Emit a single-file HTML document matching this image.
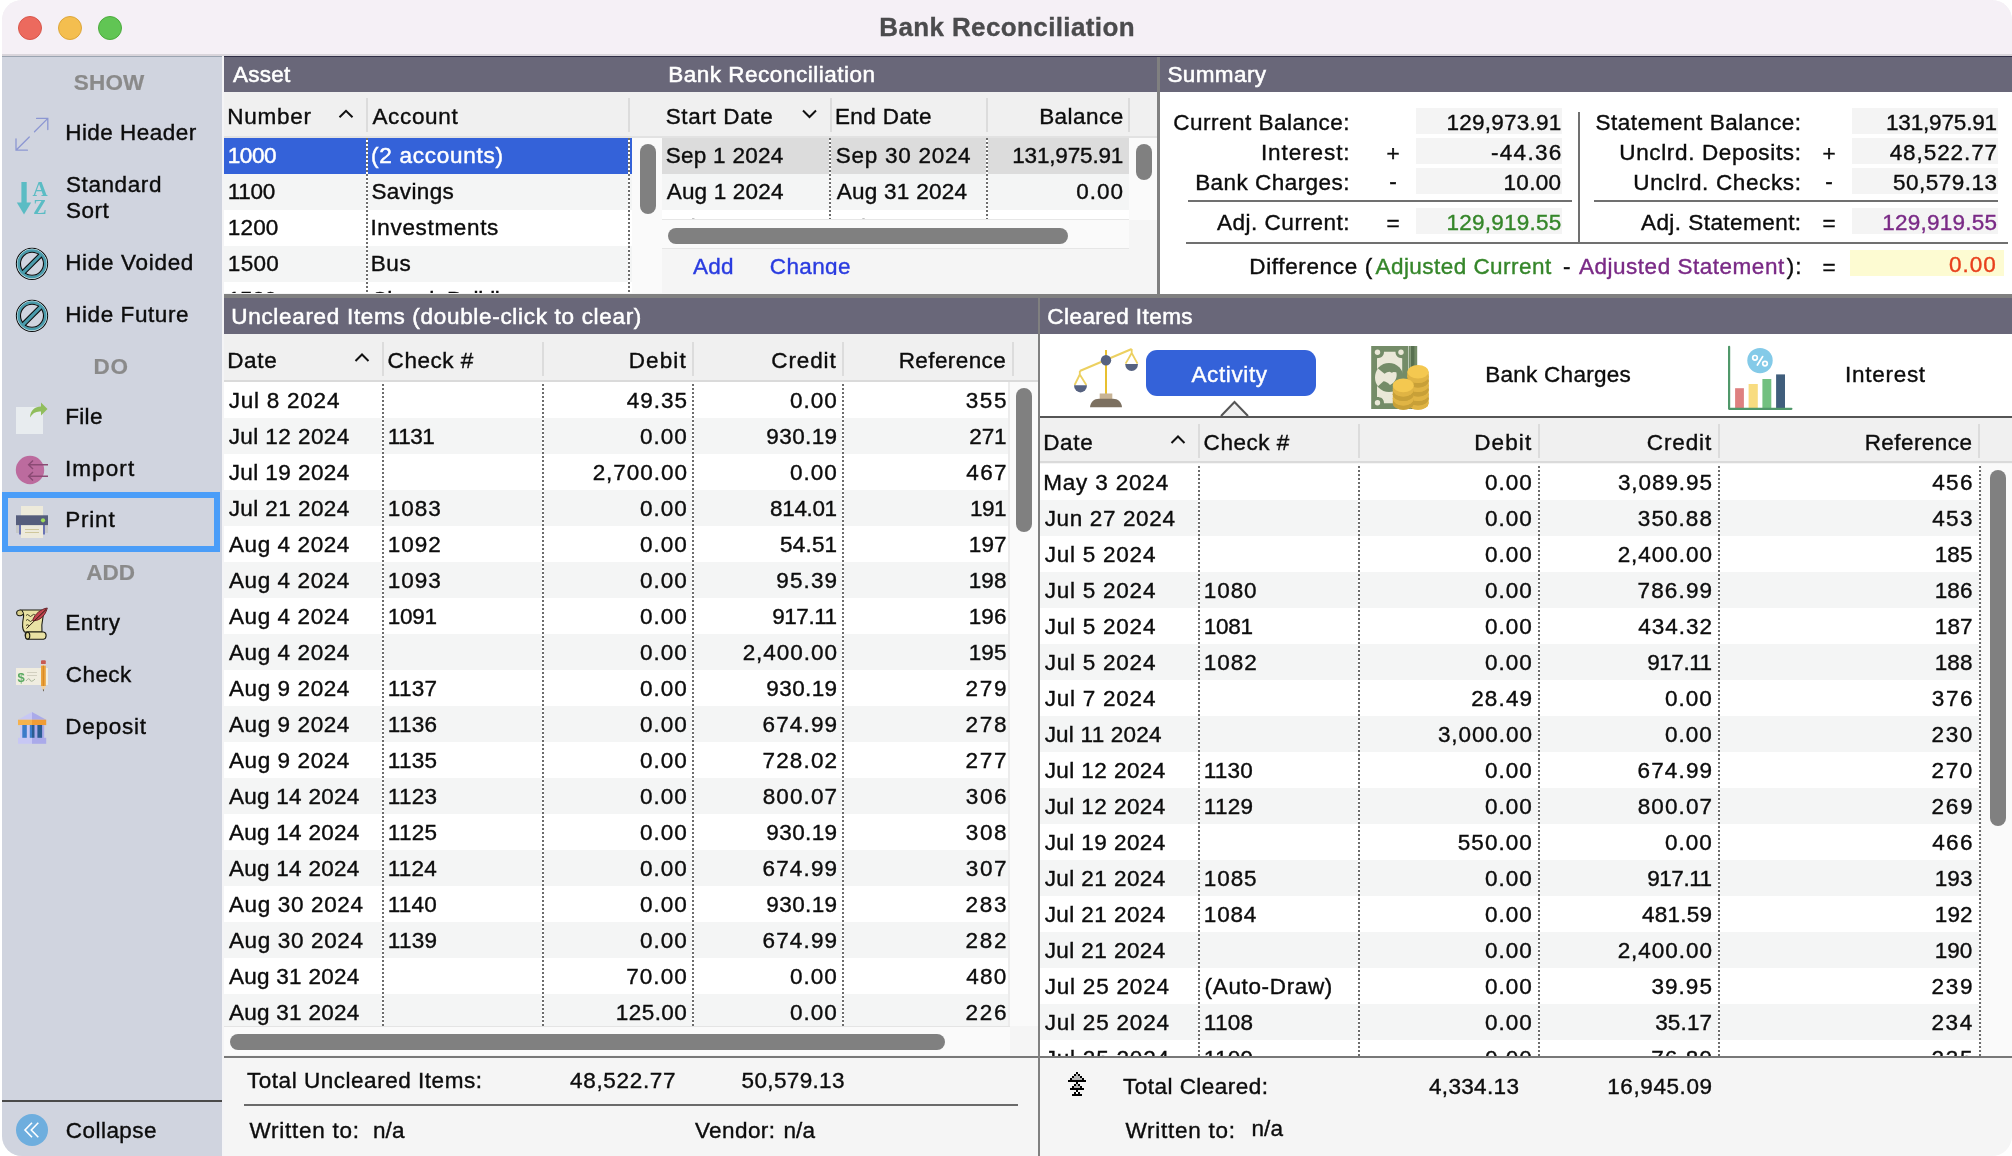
<!DOCTYPE html><html><head><meta charset="utf-8"><title>Bank Reconciliation</title><style>
*{box-sizing:border-box;margin:0;padding:0}
html,body{width:2012px;height:1156px;overflow:hidden;background:#fff}
body{font-family:"Liberation Sans",sans-serif;font-size:22.5px;color:#0c0c0c;position:relative;-webkit-text-stroke:.38px}
.a{position:absolute}
.win{will-change:transform;position:absolute;left:2px;top:0;width:2010px;height:1156px;border-radius:20px;overflow:hidden;background:#f5f5f5}
.tb{position:absolute;left:0;top:0;width:2010px;height:54px;background:#f5f0f6}
.tl{position:absolute;top:16px;width:24px;height:24px;border-radius:50%;border:1px solid}
.t{position:absolute;white-space:pre;height:30px;line-height:30px}
.side{position:absolute;left:0;top:56px;width:220px;height:1100px;background:#d0d4df}
.ph{position:absolute;background:#696779;height:36px}
.ch{position:absolute;background:#f0f0f0}
.row{position:absolute;left:0;height:36px}
.alt{background:#f4f5f5}
.hd{position:absolute;width:2px;background:#dcdcdc}
.dv2{background:repeating-linear-gradient(to bottom,#6c6c6c 0,#6c6c6c 2px,#fff 2px,#fff 4px)!important}.dv{position:absolute;width:2px;background:repeating-linear-gradient(to bottom,#fff 0,#fff 2px,#6c6c6c 2px,#6c6c6c 4px)}
.thumb{position:absolute;background:#808080;border-radius:8px}
.fld{position:absolute;background:#f4f4f4}
.hl{position:absolute;height:2px;background:#707070}
</style></head><body><div class="win">
<div class="tb"></div>
<div class="a" style="left:0;top:54px;width:2010px;height:2px;background:#d9d5db"></div>
<div class="a" style="left:222px;top:56px;width:1788px;height:1px;background:#2f2d45"></div>
<div class="tl" style="left:16px;background:#ec6a5e;border-color:#d8564b"></div>
<div class="tl" style="left:56px;background:#f4be4f;border-color:#dda63a"></div>
<div class="tl" style="left:96px;background:#61c554;border-color:#4cab3d"></div>
<span class="t" style="left:877.26px;top:12.0px;letter-spacing:0.38px;font-size:26px;font-weight:700;color:#4b4b4d;-webkit-text-stroke:0.35px;">Bank Reconciliation</span>
<div class="side"></div>
<div class="a" style="left:0;top:56px;width:220px;height:1px;background:#9ba4b1"></div>
<span class="t" style="left:71.85px;top:68.0px;letter-spacing:0.14px;font-weight:700;color:#8a8a8a;-webkit-text-stroke:0.2px;">SHOW</span>
<span class="t" style="left:91.49px;top:352.0px;letter-spacing:0.70px;font-weight:700;color:#8a8a8a;-webkit-text-stroke:0.2px;">DO</span>
<span class="t" style="left:84.24px;top:558.0px;letter-spacing:-0.02px;font-weight:700;color:#8a8a8a;-webkit-text-stroke:0.2px;">ADD</span>
<span class="t" style="left:63.15px;top:118.0px;letter-spacing:0.49px;">Hide Header</span>
<span class="t" style="left:63.98px;top:170.0px;letter-spacing:0.59px;">Standard</span>
<span class="t" style="left:63.98px;top:196.0px;letter-spacing:0.47px;">Sort</span>
<span class="t" style="left:63.15px;top:248.0px;letter-spacing:0.69px;">Hide Voided</span>
<span class="t" style="left:63.15px;top:300.0px;letter-spacing:0.58px;">Hide Future</span>
<span class="t" style="left:63.15px;top:402.0px;letter-spacing:0.36px;">File</span>
<span class="t" style="left:62.92px;top:454.0px;letter-spacing:1.10px;">Import</span>
<span class="t" style="left:63.15px;top:505.0px;letter-spacing:0.81px;">Print</span>
<span class="t" style="left:63.15px;top:608.0px;letter-spacing:0.59px;">Entry</span>
<span class="t" style="left:63.86px;top:660.0px;letter-spacing:0.41px;">Check</span>
<span class="t" style="left:63.15px;top:712.0px;letter-spacing:0.75px;">Deposit</span>
<span class="t" style="left:63.86px;top:1116.0px;letter-spacing:0.44px;">Collapse</span>
<div class="a" style="left:0;top:492px;width:218px;height:60px;border:6px solid #4a9df8"></div>
<div class="a" style="left:0;top:1100px;width:220px;height:2px;background:#4a4a4a"></div>
<div class="a" style="left:220px;top:56px;width:2px;height:1100px;background:#f4f4f6"></div>
<div class="ph" style="left:222px;top:57px;width:934px;height:35px"></div>
<span class="t" style="left:230.96px;top:60.0px;letter-spacing:0.23px;color:#fff;-webkit-text-stroke:0.55px;">Asset</span>
<span class="t" style="left:666.15px;top:60.0px;letter-spacing:0.52px;color:#fff;-webkit-text-stroke:0.55px;">Bank Reconciliation</span>
<div class="ch" style="left:222px;top:92px;width:934px;height:46px"></div>
<div class="a" style="left:222px;top:136px;width:934px;height:2px;background:#e2e2e2"></div>
<div class="hd" style="left:364.0px;top:98px;height:34px"></div>
<div class="hd" style="left:626.0px;top:98px;height:34px"></div>
<div class="hd" style="left:827.5px;top:98px;height:34px"></div>
<div class="hd" style="left:984.0px;top:98px;height:34px"></div>
<div class="hd" style="left:1126.0px;top:98px;height:34px"></div>
<span class="t" style="left:225.15px;top:102.0px;letter-spacing:0.79px;">Number</span>
<span class="t" style="left:370.46px;top:102.0px;letter-spacing:0.65px;">Account</span>
<span class="t" style="left:663.73px;top:102.0px;letter-spacing:0.64px;">Start Date</span>
<span class="t" style="left:832.90px;top:102.0px;letter-spacing:0.40px;">End Date</span>
<span class="t" style="left:1037.15px;top:102.0px;letter-spacing:0.46px;">Balance</span>
<div class="a" style="left:222px;top:138px;width:408px;height:155px;overflow:hidden;background:#fff">
<div class="row" style="top:0px;width:408px;background:#3462d9;"></div>
<span class="t" style="left:3.79px;top:3.0px;letter-spacing:-0.45px;color:#fff;-webkit-text-stroke:0.5px;">1000</span>
<span class="t" style="left:147.10px;top:3.0px;letter-spacing:0.73px;color:#fff;-webkit-text-stroke:0.5px;">(2 accounts)</span>
<div class="row alt" style="top:36px;width:408px;"></div>
<span class="t" style="left:3.79px;top:39.0px;letter-spacing:-0.27px;">1100</span>
<span class="t" style="left:147.48px;top:39.0px;letter-spacing:0.38px;">Savings</span>
<div class="row" style="top:72px;width:408px;"></div>
<span class="t" style="left:3.79px;top:75.0px;letter-spacing:0.18px;">1200</span>
<span class="t" style="left:146.42px;top:75.0px;letter-spacing:0.66px;">Investments</span>
<div class="row alt" style="top:108px;width:408px;"></div>
<span class="t" style="left:3.79px;top:111.0px;letter-spacing:0.34px;">1500</span>
<span class="t" style="left:146.65px;top:111.0px;letter-spacing:0.69px;">Bus</span>
<div class="row" style="top:144px;width:408px;"></div>
<span class="t" style="left:3.79px;top:147.0px;letter-spacing:-0.32px;">1520</span>
<span class="t" style="left:147.36px;top:147.0px;letter-spacing:-0.45px;">Church Building</span>
<div class="dv dv2" style="left:142px;top:0;height:155px"></div>
<div class="dv dv2" style="left:404px;top:0;height:155px"></div>
</div>
<div class="a" style="left:630px;top:138px;width:30px;height:155px;background:#fafafa"></div>
<div class="thumb" style="left:638px;top:144px;width:16px;height:70px"></div>
<div class="a" style="left:660px;top:138px;width:467px;height:81px;overflow:hidden;background:#fff">
<div class="row" style="top:0px;width:467px;background:#dcdcdc;"></div>
<span class="t" style="left:3.73px;top:3.0px;letter-spacing:0.28px;">Sep 1 2024</span>
<span class="t" style="left:173.73px;top:3.0px;letter-spacing:0.73px;">Sep 30 2024</span>
<span class="t" style="left:350.24px;top:3.0px;letter-spacing:-0.17px;">131,975.91</span>
<div class="row alt" style="top:36px;width:467px;"></div>
<span class="t" style="left:4.71px;top:39.0px;letter-spacing:0.18px;">Aug 1 2024</span>
<span class="t" style="left:174.71px;top:39.0px;letter-spacing:0.27px;">Aug 31 2024</span>
<span class="t" style="left:414.27px;top:39.0px;letter-spacing:1.02px;">0.00</span>
<div class="row" style="top:72px;width:467px;"></div>
<span class="t" style="left:4.40px;top:75.0px;letter-spacing:0.36px;">Jul 1 2024</span>
<span class="t" style="left:174.40px;top:75.0px;letter-spacing:0.43px;">Jul 31 2024</span>
<span class="t" style="left:414.27px;top:75.0px;letter-spacing:1.02px;">0.00</span>
<div class="dv dv2" style="left:167px;top:0;height:81px"></div>
<div class="dv dv2" style="left:324px;top:0;height:81px"></div>
</div>
<div class="a" style="left:660px;top:219px;width:467px;height:1px;background:#e6e6e6"></div>
<div class="a" style="left:660px;top:220px;width:467px;height:28px;background:#fafafa"></div>
<div class="a" style="left:660px;top:248px;width:467px;height:1px;background:#e6e6e6"></div>
<div class="thumb" style="left:666px;top:228px;width:400px;height:16px"></div>
<div class="a" style="left:1127px;top:138px;width:29px;height:82px;background:#fafafa"></div>
<div class="thumb" style="left:1134px;top:144px;width:16px;height:36px"></div>
<div class="a" style="left:660px;top:249px;width:496px;height:26px;overflow:hidden">
<span class="t" style="left:30.96px;top:3.0px;letter-spacing:0.22px;color:#2a3ce0;">Add</span>
<span class="t" style="left:107.86px;top:3.0px;letter-spacing:0.36px;color:#2a3ce0;">Change</span>
</div>
<div class="a" style="left:1155px;top:57px;width:3px;height:237px;background:#808080"></div>
<div class="ph" style="left:1158px;top:57px;width:852px;height:35px"></div>
<span class="t" style="left:1165.48px;top:60.0px;letter-spacing:0.38px;color:#fff;-webkit-text-stroke:0.55px;">Summary</span>
<div class="a" style="left:1158px;top:92px;width:852px;height:202px;background:#fff"></div>
<div class="fld" style="left:1414px;top:108px;width:146px;height:26px;background:#f4f4f4"></div>
<div class="fld" style="left:1850px;top:108px;width:146px;height:26px;background:#f4f4f4"></div>
<div class="fld" style="left:1414px;top:138px;width:146px;height:26px;background:#f4f4f4"></div>
<div class="fld" style="left:1850px;top:138px;width:146px;height:26px;background:#f4f4f4"></div>
<div class="fld" style="left:1414px;top:168px;width:146px;height:26px;background:#f4f4f4"></div>
<div class="fld" style="left:1850px;top:168px;width:146px;height:26px;background:#f4f4f4"></div>
<div class="fld" style="left:1414px;top:208px;width:146px;height:26px;background:#f4f4f4"></div>
<div class="fld" style="left:1850px;top:208px;width:146px;height:26px;background:#f4f4f4"></div>
<div class="fld" style="left:1848px;top:250px;width:154px;height:26px;background:#fdfbd2"></div>
<span class="t" style="left:1171.36px;top:108.0px;letter-spacing:0.49px;">Current Balance:</span>
<span class="t" style="left:1444.54px;top:108.0px;letter-spacing:0.24px;">129,973.91</span>
<span class="t" style="left:1593.48px;top:108.0px;letter-spacing:0.54px;">Statement Balance:</span>
<span class="t" style="left:1883.99px;top:108.0px;letter-spacing:-0.17px;">131,975.91</span>
<span class="t" style="left:1258.92px;top:138.0px;letter-spacing:0.92px;">Interest:</span>
<span class="t" style="left:1371px;width:40px;text-align:center;top:139px">+</span>
<span class="t" style="left:1489.05px;top:138.0px;letter-spacing:1.28px;">-44.36</span>
<span class="t" style="left:1617.26px;top:138.0px;letter-spacing:0.65px;">Unclrd. Deposits:</span>
<span class="t" style="left:1807px;width:40px;text-align:center;top:139px">+</span>
<span class="t" style="left:1887.68px;top:138.0px;letter-spacing:0.92px;">48,522.77</span>
<span class="t" style="left:1193.15px;top:168.0px;letter-spacing:0.46px;">Bank Charges:</span>
<span class="t" style="left:1371px;width:40px;text-align:center;top:167px">-</span>
<span class="t" style="left:1501.54px;top:168.0px;letter-spacing:0.32px;">10.00</span>
<span class="t" style="left:1631.26px;top:168.0px;letter-spacing:0.64px;">Unclrd. Checks:</span>
<span class="t" style="left:1807px;width:40px;text-align:center;top:167px">-</span>
<span class="t" style="left:1891.00px;top:168.0px;letter-spacing:0.49px;">50,579.13</span>
<span class="t" style="left:1214.96px;top:208.0px;letter-spacing:0.52px;">Adj. Current:</span>
<span class="t" style="left:1371px;width:40px;text-align:center;top:209px">=</span>
<span class="t" style="left:1444.54px;top:208.0px;letter-spacing:0.23px;color:#35862a;">129,919.55</span>
<span class="t" style="left:1638.96px;top:208.0px;letter-spacing:0.45px;">Adj. Statement:</span>
<span class="t" style="left:1807px;width:40px;text-align:center;top:209px">=</span>
<span class="t" style="left:1880.29px;top:208.0px;letter-spacing:0.23px;color:#7a2a86;">129,919.55</span>
<div class="hl" style="left:1186px;top:200px;width:384px"></div>
<div class="hl" style="left:1592px;top:200px;width:404px"></div>
<div class="hl" style="left:1184px;top:242px;width:822px"></div>
<div class="a" style="left:1576px;top:112px;width:2px;height:130px;background:#707070"></div>
<span class="t" style="left:1247.35px;top:252.0px;letter-spacing:0.63px;">Difference (</span>
<span class="t" style="left:1373.46px;top:252.0px;letter-spacing:0.46px;color:#35862a;">Adjusted Current</span>
<span class="t" style="left:1561.00px;top:252.0px;letter-spacing:2.50px;">-</span>
<span class="t" style="left:1576.96px;top:252.0px;letter-spacing:0.52px;color:#7a2a86;">Adjusted Statement</span>
<span class="t" style="left:1784.87px;top:252.0px;letter-spacing:0.94px;">):</span>
<span class="t" style="left:1807px;width:40px;text-align:center;top:253px">=</span>
<span class="t" style="left:1947.02px;top:250.0px;letter-spacing:1.02px;color:#e8401c;">0.00</span>
<div class="a" style="left:222px;top:294px;width:1788px;height:4px;background:#808080"></div>
<div class="ph" style="left:222px;top:298px;width:814px"></div>
<span class="t" style="left:229.26px;top:302.0px;letter-spacing:0.69px;color:#fff;-webkit-text-stroke:0.55px;">Uncleared Items (double-click to clear)</span>
<div class="ch" style="left:222px;top:334px;width:814px;height:47px"></div>
<div class="a" style="left:222px;top:380px;width:814px;height:2px;background:#dadada"></div>
<div class="hd" style="left:379.5px;top:342px;height:34px"></div>
<div class="hd" style="left:540.0px;top:342px;height:34px"></div>
<div class="hd" style="left:690.0px;top:342px;height:34px"></div>
<div class="hd" style="left:840.0px;top:342px;height:34px"></div>
<div class="hd" style="left:1010.0px;top:342px;height:34px"></div>
<span class="t" style="left:225.15px;top:346.0px;letter-spacing:0.69px;">Date</span>
<span class="t" style="left:385.61px;top:346.0px;letter-spacing:0.53px;">Check #</span>
<span class="t" style="left:626.65px;top:346.0px;letter-spacing:1.12px;">Debit</span>
<span class="t" style="left:769.36px;top:346.0px;letter-spacing:0.86px;">Credit</span>
<span class="t" style="left:896.65px;top:346.0px;letter-spacing:0.41px;">Reference</span>
<div class="a" style="left:222px;top:382px;width:786px;height:644px;overflow:hidden;background:#fff">
<span class="t" style="left:4.65px;top:4.0px;letter-spacing:0.77px;">Jul 8 2024</span>
<span class="t" style="left:402.78px;top:4.0px;letter-spacing:0.96px;">49.35</span>
<span class="t" style="left:566.02px;top:4.0px;letter-spacing:1.02px;">0.00</span>
<span class="t" style="left:741.84px;top:4.0px;letter-spacing:1.53px;">355</span>
<div class="row alt" style="top:36px;width:786px"></div>
<span class="t" style="left:4.65px;top:40.0px;letter-spacing:0.43px;">Jul 12 2024</span>
<span class="t" style="left:163.79px;top:40.0px;letter-spacing:-0.45px;">1131</span>
<span class="t" style="left:416.02px;top:40.0px;letter-spacing:1.02px;">0.00</span>
<span class="t" style="left:542.35px;top:40.0px;letter-spacing:0.38px;">930.19</span>
<span class="t" style="left:745.27px;top:40.0px;letter-spacing:-0.11px;">271</span>
<span class="t" style="left:4.65px;top:76.0px;letter-spacing:0.43px;">Jul 19 2024</span>
<span class="t" style="left:368.67px;top:76.0px;letter-spacing:0.95px;">2,700.00</span>
<span class="t" style="left:566.02px;top:76.0px;letter-spacing:1.02px;">0.00</span>
<span class="t" style="left:742.18px;top:76.0px;letter-spacing:1.45px;">467</span>
<div class="row alt" style="top:108px;width:786px"></div>
<span class="t" style="left:4.65px;top:112.0px;letter-spacing:0.43px;">Jul 21 2024</span>
<span class="t" style="left:163.79px;top:112.0px;letter-spacing:0.95px;">1083</span>
<span class="t" style="left:416.02px;top:112.0px;letter-spacing:1.02px;">0.00</span>
<span class="t" style="left:546.12px;top:112.0px;letter-spacing:-0.37px;">814.01</span>
<span class="t" style="left:745.95px;top:112.0px;letter-spacing:-0.45px;">191</span>
<span class="t" style="left:4.96px;top:148.0px;letter-spacing:0.59px;">Aug 4 2024</span>
<span class="t" style="left:163.79px;top:148.0px;letter-spacing:0.99px;">1092</span>
<span class="t" style="left:416.02px;top:148.0px;letter-spacing:1.02px;">0.00</span>
<span class="t" style="left:556.10px;top:148.0px;letter-spacing:0.17px;">54.51</span>
<span class="t" style="left:744.69px;top:148.0px;letter-spacing:0.20px;">197</span>
<div class="row alt" style="top:180px;width:786px"></div>
<span class="t" style="left:4.96px;top:184.0px;letter-spacing:0.59px;">Aug 4 2024</span>
<span class="t" style="left:163.79px;top:184.0px;letter-spacing:0.95px;">1093</span>
<span class="t" style="left:416.02px;top:184.0px;letter-spacing:1.02px;">0.00</span>
<span class="t" style="left:552.25px;top:184.0px;letter-spacing:1.13px;">95.39</span>
<span class="t" style="left:744.69px;top:184.0px;letter-spacing:0.12px;">198</span>
<span class="t" style="left:4.96px;top:220.0px;letter-spacing:0.59px;">Aug 4 2024</span>
<span class="t" style="left:163.79px;top:220.0px;letter-spacing:-0.25px;">1091</span>
<span class="t" style="left:416.02px;top:220.0px;letter-spacing:1.02px;">0.00</span>
<span class="t" style="left:548.19px;top:220.0px;letter-spacing:-0.45px;">917.11</span>
<span class="t" style="left:744.69px;top:220.0px;letter-spacing:0.13px;">196</span>
<div class="row alt" style="top:252px;width:786px"></div>
<span class="t" style="left:4.96px;top:256.0px;letter-spacing:0.59px;">Aug 4 2024</span>
<span class="t" style="left:416.02px;top:256.0px;letter-spacing:1.02px;">0.00</span>
<span class="t" style="left:518.67px;top:256.0px;letter-spacing:0.95px;">2,400.00</span>
<span class="t" style="left:744.69px;top:256.0px;letter-spacing:0.11px;">195</span>
<span class="t" style="left:4.96px;top:292.0px;letter-spacing:0.59px;">Aug 9 2024</span>
<span class="t" style="left:163.79px;top:292.0px;letter-spacing:0.32px;">1137</span>
<span class="t" style="left:416.02px;top:292.0px;letter-spacing:1.02px;">0.00</span>
<span class="t" style="left:542.35px;top:292.0px;letter-spacing:0.38px;">930.19</span>
<span class="t" style="left:741.57px;top:292.0px;letter-spacing:1.73px;">279</span>
<div class="row alt" style="top:324px;width:786px"></div>
<span class="t" style="left:4.96px;top:328.0px;letter-spacing:0.59px;">Aug 9 2024</span>
<span class="t" style="left:163.79px;top:328.0px;letter-spacing:0.27px;">1136</span>
<span class="t" style="left:416.02px;top:328.0px;letter-spacing:1.02px;">0.00</span>
<span class="t" style="left:538.56px;top:328.0px;letter-spacing:1.14px;">674.99</span>
<span class="t" style="left:741.57px;top:328.0px;letter-spacing:1.68px;">278</span>
<span class="t" style="left:4.96px;top:364.0px;letter-spacing:0.59px;">Aug 9 2024</span>
<span class="t" style="left:163.79px;top:364.0px;letter-spacing:0.26px;">1135</span>
<span class="t" style="left:416.02px;top:364.0px;letter-spacing:1.02px;">0.00</span>
<span class="t" style="left:538.55px;top:364.0px;letter-spacing:1.15px;">728.02</span>
<span class="t" style="left:741.57px;top:364.0px;letter-spacing:1.76px;">277</span>
<div class="row alt" style="top:396px;width:786px"></div>
<span class="t" style="left:4.96px;top:400.0px;letter-spacing:0.27px;">Aug 14 2024</span>
<span class="t" style="left:163.79px;top:400.0px;letter-spacing:0.27px;">1123</span>
<span class="t" style="left:416.02px;top:400.0px;letter-spacing:1.02px;">0.00</span>
<span class="t" style="left:538.72px;top:400.0px;letter-spacing:1.12px;">800.07</span>
<span class="t" style="left:741.84px;top:400.0px;letter-spacing:1.55px;">306</span>
<span class="t" style="left:4.96px;top:436.0px;letter-spacing:0.27px;">Aug 14 2024</span>
<span class="t" style="left:163.79px;top:436.0px;letter-spacing:0.26px;">1125</span>
<span class="t" style="left:416.02px;top:436.0px;letter-spacing:1.02px;">0.00</span>
<span class="t" style="left:542.35px;top:436.0px;letter-spacing:0.38px;">930.19</span>
<span class="t" style="left:741.84px;top:436.0px;letter-spacing:1.54px;">308</span>
<div class="row alt" style="top:468px;width:786px"></div>
<span class="t" style="left:4.96px;top:472.0px;letter-spacing:0.27px;">Aug 14 2024</span>
<span class="t" style="left:163.79px;top:472.0px;letter-spacing:0.16px;">1124</span>
<span class="t" style="left:416.02px;top:472.0px;letter-spacing:1.02px;">0.00</span>
<span class="t" style="left:538.56px;top:472.0px;letter-spacing:1.14px;">674.99</span>
<span class="t" style="left:741.84px;top:472.0px;letter-spacing:1.62px;">307</span>
<span class="t" style="left:4.96px;top:508.0px;letter-spacing:0.64px;">Aug 30 2024</span>
<span class="t" style="left:163.79px;top:508.0px;letter-spacing:0.23px;">1140</span>
<span class="t" style="left:416.02px;top:508.0px;letter-spacing:1.02px;">0.00</span>
<span class="t" style="left:542.35px;top:508.0px;letter-spacing:0.38px;">930.19</span>
<span class="t" style="left:741.57px;top:508.0px;letter-spacing:1.69px;">283</span>
<div class="row alt" style="top:540px;width:786px"></div>
<span class="t" style="left:4.96px;top:544.0px;letter-spacing:0.64px;">Aug 30 2024</span>
<span class="t" style="left:163.79px;top:544.0px;letter-spacing:0.30px;">1139</span>
<span class="t" style="left:416.02px;top:544.0px;letter-spacing:1.02px;">0.00</span>
<span class="t" style="left:538.56px;top:544.0px;letter-spacing:1.14px;">674.99</span>
<span class="t" style="left:741.57px;top:544.0px;letter-spacing:1.76px;">282</span>
<span class="t" style="left:4.96px;top:580.0px;letter-spacing:0.27px;">Aug 31 2024</span>
<span class="t" style="left:402.15px;top:580.0px;letter-spacing:1.10px;">70.00</span>
<span class="t" style="left:566.02px;top:580.0px;letter-spacing:1.02px;">0.00</span>
<span class="t" style="left:742.18px;top:580.0px;letter-spacing:1.32px;">480</span>
<div class="row alt" style="top:612px;width:786px"></div>
<span class="t" style="left:4.96px;top:616.0px;letter-spacing:0.27px;">Aug 31 2024</span>
<span class="t" style="left:391.69px;top:616.0px;letter-spacing:0.47px;">125.00</span>
<span class="t" style="left:566.02px;top:616.0px;letter-spacing:1.02px;">0.00</span>
<span class="t" style="left:741.57px;top:616.0px;letter-spacing:1.69px;">226</span>
<div class="dv" style="left:157.5px;top:0;height:644px"></div>
<div class="dv" style="left:318.0px;top:0;height:644px"></div>
<div class="dv" style="left:468.0px;top:0;height:644px"></div>
<div class="dv" style="left:618.0px;top:0;height:644px"></div>
</div>
<div class="a" style="left:1006px;top:382px;width:30px;height:644px;background:#fafafa"></div>
<div class="a" style="left:1006px;top:382px;width:2px;height:645px;background:#ececec"></div>
<div class="thumb" style="left:1014px;top:388px;width:16px;height:144px"></div>
<div class="a" style="left:222px;top:1026px;width:786px;height:1px;background:#e4e4e4"></div>
<div class="a" style="left:222px;top:1027px;width:786px;height:28px;background:#fafafa"></div>
<div class="thumb" style="left:228px;top:1034px;width:715px;height:16px"></div>
<div class="a" style="left:222px;top:1056px;width:1788px;height:2px;background:#787878"></div>
<span class="t" style="left:244.99px;top:1066.0px;letter-spacing:0.53px;">Total Uncleared Items:</span>
<span class="t" style="left:567.98px;top:1066.0px;letter-spacing:0.69px;">48,522.77</span>
<span class="t" style="left:739.60px;top:1066.0px;letter-spacing:0.35px;">50,579.13</span>
<div class="hl" style="left:242px;top:1104px;width:774px;background:#6a6a6a"></div>
<span class="t" style="left:247.40px;top:1116.0px;letter-spacing:0.75px;">Written to:</span>
<span class="t" style="left:371.01px;top:1116.0px;letter-spacing:0.11px;">n/a</span>
<span class="t" style="left:692.90px;top:1116.0px;letter-spacing:0.43px;">Vendor:</span>
<span class="t" style="left:781.51px;top:1116.0px;letter-spacing:0.11px;">n/a</span>
<div class="a" style="left:1036px;top:298px;width:2px;height:858px;background:#808080"></div>
<div class="ph" style="left:1038px;top:298px;width:972px"></div>
<span class="t" style="left:1045.36px;top:302.0px;letter-spacing:0.43px;color:#fff;-webkit-text-stroke:0.55px;">Cleared Items</span>
<div class="a" style="left:1038px;top:334px;width:972px;height:82px;background:#fff"></div>
<div class="a" style="left:1144px;top:350px;width:170px;height:46px;border-radius:11px;background:#3462d9"></div>
<span class="t" style="left:1189.46px;top:360.0px;letter-spacing:0.62px;color:#fff;-webkit-text-stroke:0.4px;">Activity</span>
<span class="t" style="left:1483.15px;top:360.0px;letter-spacing:0.28px;">Bank Charges</span>
<span class="t" style="left:1842.92px;top:360.0px;letter-spacing:0.74px;">Interest</span>
<div class="a" style="left:1038px;top:416px;width:972px;height:2px;background:#555"></div>
<svg class="a" style="left:1215px;top:397px" width="40" height="22" viewBox="0 0 40 22"><path d="M4 19 L17.5 5 L31 19" fill="#f0f0f0" stroke="#555" stroke-width="2"/></svg>
<div class="ch" style="left:1038px;top:418px;width:972px;height:44px"></div>
<div class="a" style="left:1038px;top:461px;width:972px;height:2px;background:#dadada"></div>
<div class="hd" style="left:1196px;top:424px;height:34px"></div>
<div class="hd" style="left:1356px;top:424px;height:34px"></div>
<div class="hd" style="left:1536px;top:424px;height:34px"></div>
<div class="hd" style="left:1716px;top:424px;height:34px"></div>
<div class="hd" style="left:1976px;top:424px;height:34px"></div>
<span class="t" style="left:1041.15px;top:428.0px;letter-spacing:0.69px;">Date</span>
<span class="t" style="left:1201.61px;top:428.0px;letter-spacing:0.53px;">Check #</span>
<span class="t" style="left:1472.15px;top:428.0px;letter-spacing:1.12px;">Debit</span>
<span class="t" style="left:1644.86px;top:428.0px;letter-spacing:0.86px;">Credit</span>
<span class="t" style="left:1862.65px;top:428.0px;letter-spacing:0.44px;">Reference</span>
<div class="a" style="left:1038px;top:464px;width:940px;height:592px;overflow:hidden;background:#fff">
<span class="t" style="left:3.15px;top:4.0px;letter-spacing:0.83px;">May 3 2024</span>
<span class="t" style="left:445.02px;top:4.0px;letter-spacing:1.02px;">0.00</span>
<span class="t" style="left:577.94px;top:4.0px;letter-spacing:0.92px;">3,089.95</span>
<span class="t" style="left:892.18px;top:4.0px;letter-spacing:1.38px;">456</span>
<div class="row alt" style="top:36px;width:940px"></div>
<span class="t" style="left:4.65px;top:40.0px;letter-spacing:0.64px;">Jun 27 2024</span>
<span class="t" style="left:445.02px;top:40.0px;letter-spacing:1.02px;">0.00</span>
<span class="t" style="left:597.84px;top:40.0px;letter-spacing:1.06px;">350.88</span>
<span class="t" style="left:892.18px;top:40.0px;letter-spacing:1.38px;">453</span>
<span class="t" style="left:4.65px;top:76.0px;letter-spacing:0.77px;">Jul 5 2024</span>
<span class="t" style="left:445.02px;top:76.0px;letter-spacing:1.02px;">0.00</span>
<span class="t" style="left:577.67px;top:76.0px;letter-spacing:0.95px;">2,400.00</span>
<span class="t" style="left:894.69px;top:76.0px;letter-spacing:0.11px;">185</span>
<div class="row alt" style="top:108px;width:940px"></div>
<span class="t" style="left:4.65px;top:112.0px;letter-spacing:0.77px;">Jul 5 2024</span>
<span class="t" style="left:163.79px;top:112.0px;letter-spacing:0.91px;">1080</span>
<span class="t" style="left:445.02px;top:112.0px;letter-spacing:1.02px;">0.00</span>
<span class="t" style="left:597.55px;top:112.0px;letter-spacing:1.14px;">786.99</span>
<span class="t" style="left:894.69px;top:112.0px;letter-spacing:0.13px;">186</span>
<span class="t" style="left:4.65px;top:148.0px;letter-spacing:0.77px;">Jul 5 2024</span>
<span class="t" style="left:163.79px;top:148.0px;letter-spacing:-0.25px;">1081</span>
<span class="t" style="left:445.02px;top:148.0px;letter-spacing:1.02px;">0.00</span>
<span class="t" style="left:598.18px;top:148.0px;letter-spacing:1.02px;">434.32</span>
<span class="t" style="left:894.69px;top:148.0px;letter-spacing:0.20px;">187</span>
<div class="row alt" style="top:180px;width:940px"></div>
<span class="t" style="left:4.65px;top:184.0px;letter-spacing:0.77px;">Jul 5 2024</span>
<span class="t" style="left:163.79px;top:184.0px;letter-spacing:0.99px;">1082</span>
<span class="t" style="left:445.02px;top:184.0px;letter-spacing:1.02px;">0.00</span>
<span class="t" style="left:607.19px;top:184.0px;letter-spacing:-0.45px;">917.11</span>
<span class="t" style="left:894.69px;top:184.0px;letter-spacing:0.12px;">188</span>
<span class="t" style="left:4.65px;top:220.0px;letter-spacing:0.77px;">Jul 7 2024</span>
<span class="t" style="left:431.17px;top:220.0px;letter-spacing:1.15px;">28.49</span>
<span class="t" style="left:625.02px;top:220.0px;letter-spacing:1.02px;">0.00</span>
<span class="t" style="left:891.84px;top:220.0px;letter-spacing:1.55px;">376</span>
<div class="row alt" style="top:252px;width:940px"></div>
<span class="t" style="left:4.65px;top:256.0px;letter-spacing:0.23px;">Jul 11 2024</span>
<span class="t" style="left:397.94px;top:256.0px;letter-spacing:0.91px;">3,000.00</span>
<span class="t" style="left:625.02px;top:256.0px;letter-spacing:1.02px;">0.00</span>
<span class="t" style="left:891.57px;top:256.0px;letter-spacing:1.63px;">230</span>
<span class="t" style="left:4.65px;top:292.0px;letter-spacing:0.43px;">Jul 12 2024</span>
<span class="t" style="left:163.79px;top:292.0px;letter-spacing:0.23px;">1130</span>
<span class="t" style="left:445.02px;top:292.0px;letter-spacing:1.02px;">0.00</span>
<span class="t" style="left:597.56px;top:292.0px;letter-spacing:1.14px;">674.99</span>
<span class="t" style="left:891.57px;top:292.0px;letter-spacing:1.63px;">270</span>
<div class="row alt" style="top:324px;width:940px"></div>
<span class="t" style="left:4.65px;top:328.0px;letter-spacing:0.43px;">Jul 12 2024</span>
<span class="t" style="left:163.79px;top:328.0px;letter-spacing:0.30px;">1129</span>
<span class="t" style="left:445.02px;top:328.0px;letter-spacing:1.02px;">0.00</span>
<span class="t" style="left:597.72px;top:328.0px;letter-spacing:1.12px;">800.07</span>
<span class="t" style="left:891.57px;top:328.0px;letter-spacing:1.73px;">269</span>
<span class="t" style="left:4.65px;top:364.0px;letter-spacing:0.43px;">Jul 19 2024</span>
<span class="t" style="left:417.80px;top:364.0px;letter-spacing:1.05px;">550.00</span>
<span class="t" style="left:625.02px;top:364.0px;letter-spacing:1.02px;">0.00</span>
<span class="t" style="left:892.18px;top:364.0px;letter-spacing:1.38px;">466</span>
<div class="row alt" style="top:396px;width:940px"></div>
<span class="t" style="left:4.65px;top:400.0px;letter-spacing:0.43px;">Jul 21 2024</span>
<span class="t" style="left:163.79px;top:400.0px;letter-spacing:0.93px;">1085</span>
<span class="t" style="left:445.02px;top:400.0px;letter-spacing:1.02px;">0.00</span>
<span class="t" style="left:607.19px;top:400.0px;letter-spacing:-0.45px;">917.11</span>
<span class="t" style="left:894.69px;top:400.0px;letter-spacing:0.13px;">193</span>
<span class="t" style="left:4.65px;top:436.0px;letter-spacing:0.43px;">Jul 21 2024</span>
<span class="t" style="left:163.79px;top:436.0px;letter-spacing:0.84px;">1084</span>
<span class="t" style="left:445.02px;top:436.0px;letter-spacing:1.02px;">0.00</span>
<span class="t" style="left:601.88px;top:436.0px;letter-spacing:0.27px;">481.59</span>
<span class="t" style="left:894.69px;top:436.0px;letter-spacing:0.20px;">192</span>
<div class="row alt" style="top:468px;width:940px"></div>
<span class="t" style="left:4.65px;top:472.0px;letter-spacing:0.43px;">Jul 21 2024</span>
<span class="t" style="left:445.02px;top:472.0px;letter-spacing:1.02px;">0.00</span>
<span class="t" style="left:577.67px;top:472.0px;letter-spacing:0.95px;">2,400.00</span>
<span class="t" style="left:894.69px;top:472.0px;letter-spacing:0.07px;">190</span>
<span class="t" style="left:4.65px;top:508.0px;letter-spacing:0.80px;">Jul 25 2024</span>
<span class="t" style="left:164.60px;top:508.0px;letter-spacing:0.65px;">(Auto-Draw)</span>
<span class="t" style="left:445.02px;top:508.0px;letter-spacing:1.02px;">0.00</span>
<span class="t" style="left:611.44px;top:508.0px;letter-spacing:1.05px;">39.95</span>
<span class="t" style="left:891.57px;top:508.0px;letter-spacing:1.73px;">239</span>
<div class="row alt" style="top:540px;width:940px"></div>
<span class="t" style="left:4.65px;top:544.0px;letter-spacing:0.80px;">Jul 25 2024</span>
<span class="t" style="left:163.79px;top:544.0px;letter-spacing:0.27px;">1108</span>
<span class="t" style="left:445.02px;top:544.0px;letter-spacing:1.02px;">0.00</span>
<span class="t" style="left:615.14px;top:544.0px;letter-spacing:0.17px;">35.17</span>
<span class="t" style="left:891.57px;top:544.0px;letter-spacing:1.52px;">234</span>
<span class="t" style="left:4.65px;top:580.0px;letter-spacing:0.80px;">Jul 25 2024</span>
<span class="t" style="left:163.79px;top:580.0px;letter-spacing:0.30px;">1109</span>
<span class="t" style="left:445.02px;top:580.0px;letter-spacing:1.02px;">0.00</span>
<span class="t" style="left:611.15px;top:580.0px;letter-spacing:1.15px;">76.89</span>
<span class="t" style="left:891.57px;top:580.0px;letter-spacing:1.66px;">235</span>
<div class="dv" style="left:158px;top:0;height:592px"></div>
<div class="dv" style="left:318px;top:0;height:592px"></div>
<div class="dv" style="left:498px;top:0;height:592px"></div>
<div class="dv" style="left:678px;top:0;height:592px"></div>
</div>
<div class="dv" style="left:1977px;top:464px;height:592px"></div>
<div class="a" style="left:1980px;top:464px;width:30px;height:592px;background:#fafafa"></div>
<div class="thumb" style="left:1988px;top:470px;width:16px;height:356px"></div>
<span class="t" style="left:1120.99px;top:1072.0px;letter-spacing:0.48px;">Total Cleared:</span>
<span class="t" style="left:1426.98px;top:1072.0px;letter-spacing:0.34px;">4,334.13</span>
<span class="t" style="left:1605.19px;top:1072.0px;letter-spacing:0.60px;">16,945.09</span>
<span class="t" style="left:1123.40px;top:1116.0px;letter-spacing:0.75px;">Written to:</span>
<span class="t" style="left:1249.51px;top:1114.0px;letter-spacing:0.11px;">n/a</span>
<svg class="a" style="left:-2px;top:0;-webkit-text-stroke:0" width="2012" height="1156" viewBox="0 0 2012 1156">
<g stroke="#8c97d2" stroke-width="1.3" fill="none" stroke-linecap="round"><path d="M34.5 131.8 L47.6 118.6 M36.6 118.4 H47.8 V129.6"/><path d="M29.3 137 L16.2 150 M16 138.8 V150.2 H27.4"/></g>
<g fill="#5bbcc4"><rect x="21.4" y="182" width="5.3" height="22"/><path d="M16.8 202.5 H31.2 L24 214.5 Z"/></g>
<text x="40" y="196" text-anchor="middle" font-family="Liberation Serif,serif" font-weight="700" font-size="21" fill="#5bbcc4">A</text>
<text x="40" y="214" text-anchor="middle" font-family="Liberation Serif,serif" font-weight="700" font-size="20" fill="#5bbcc4">Z</text>
<g transform="translate(32 263.8)"><circle r="15.6" fill="none" stroke="#0a0a0a" stroke-width="1.1"/><circle r="14.75" fill="none" stroke="#c5f0f2" stroke-width=".8"/><circle r="13.2" fill="none" stroke="#4a9bab" stroke-width="2.7"/><circle r="11.5" fill="none" stroke="#0a0a0a" stroke-width="1.1"/><path d="M-8.4 8.4 L8.4 -8.4" stroke="#0a0a0a" stroke-width="5.2"/><path d="M-9.6 9.6 L9.6 -9.6" stroke="#4a9bab" stroke-width="3.1"/></g>
<g transform="translate(32 315.8)"><circle r="15.6" fill="none" stroke="#0a0a0a" stroke-width="1.1"/><circle r="14.75" fill="none" stroke="#c5f0f2" stroke-width=".8"/><circle r="13.2" fill="none" stroke="#4a9bab" stroke-width="2.7"/><circle r="11.5" fill="none" stroke="#0a0a0a" stroke-width="1.1"/><path d="M-8.4 8.4 L8.4 -8.4" stroke="#0a0a0a" stroke-width="5.2"/><path d="M-9.6 9.6 L9.6 -9.6" stroke="#4a9bab" stroke-width="3.1"/></g>
<rect x="16" y="407" width="27" height="27" fill="#e8ecef"/>
<path d="M30 417.5 C30.5 410 35 406.5 41 406.5 L41 402.5 L47.5 409 L41 415.5 L41 411.5 C36 411 32.5 413 30 417.5 Z" fill="#90bd5c"/>
<circle cx="30" cy="470" r="14.2" fill="#bc6b9e"/>
<g stroke="#8b4a74" stroke-width="1.4" fill="none"><path d="M48 464.7 H28.6 M33 460.5 L28.6 464.7 L33 469"/><path d="M48 476.3 H28.6 M33 472 L28.6 476.3 L33 480.6"/></g>
<rect x="21" y="506" width="22" height="10" fill="#edeadb"/>
<rect x="16" y="525" width="3" height="8" fill="#c6c8c8"/><rect x="45" y="525" width="3" height="8" fill="#c6c8c8"/>
<rect x="19" y="525" width="2" height="9.5" fill="#6a74b5"/><rect x="43" y="525" width="2" height="9.5" fill="#6a74b5"/>
<rect x="21" y="525" width="22" height="13" fill="#edeadb"/>
<rect x="16" y="515.3" width="32" height="9.8" fill="#555d7c"/>
<circle cx="43" cy="520.3" r="2.1" fill="#9edc5a"/>
<rect x="25" y="529" width="14" height="1" fill="#cfc79c"/><rect x="25" y="532" width="14" height="1" fill="#cfc79c"/>
<g stroke="#1a1a10" stroke-width="1.1" stroke-linejoin="round"><path d="M21 610 H41 C43.5 610 44 613 43 617 C41.5 624 41.5 628 42 632 H24.5 C21.5 629 22.5 622 23.5 617 C24 614 23.5 612 21 610 Z" fill="#e9e2a4"/><path d="M21 610 C17 609.5 16 612.5 17 614.5 C18.5 616.5 22 616 23.3 614 " fill="#d9d08c"/><path d="M27 632 H43.5 C47 632.5 47 638.5 43.5 639.3 H28 C24.5 638.5 24.5 632.5 27 632 Z" fill="#e9e2a4"/><ellipse cx="27.6" cy="635.7" rx="2.2" ry="3.4" fill="#d9d08c"/></g>
<g stroke="#33301a" stroke-width=".9" fill="none"><path d="M26 615.5 q1.5 -2 3 0 t3 0 t3 -.5"/><path d="M26 620.5 q1.5 -2 3 0 t3 0"/><path d="M26 625.5 q1.5 -1.5 3 0"/></g>
<path d="M47.3 608 C41 609 35 613.5 32.5 620.5 C37.5 621.5 45 617.5 47.3 608 Z" fill="#c2434e" stroke="#5a1a20" stroke-width=".9"/>
<path d="M46 609.5 L26.5 628.5" stroke="#2a1a10" stroke-width="1" fill="none"/>
<rect x="16" y="668" width="32" height="17" fill="#f0ede0"/>
<text x="21" y="682" text-anchor="middle" font-family="Liberation Sans,sans-serif" font-weight="700" font-size="13" fill="#5aaa62">$</text>
<g stroke="#d2cfc0" stroke-width="1"><path d="M27 672.5 H37 M27 675.5 H37"/></g><path d="M26 681 q3 -4 4 -1 t5 -1" stroke="#a9b79a" stroke-width="1" fill="none"/>
<rect x="41" y="660.3" width="4.8" height="4.2" rx="1" fill="#c75a52"/><rect x="41" y="664.2" width="4.8" height="1.6" fill="#e6e3dc"/><rect x="41" y="665.6" width="4.8" height="20.4" fill="#eaa23c"/><rect x="42.8" y="665.6" width="1.2" height="20.4" fill="#d98a26"/><path d="M41 686 H45.8 L43.4 691.6 Z" fill="#f0d2a4"/><path d="M42.8 689.6 H44 L43.4 691.8 Z" fill="#333"/>
<path d="M32 712 L18 719.8 H32 Z" fill="#c7c7f4"/><path d="M32 712 L46.2 719.8 H32 Z" fill="#aaaaea"/>
<rect x="18" y="719.7" width="14" height="5.4" fill="#f5b24e"/><rect x="32" y="719.7" width="14.2" height="5.4" fill="#f09c34"/>
<rect x="20" y="725" width="12" height="13" fill="#c7c7f4"/><rect x="32" y="725" width="12.2" height="13" fill="#aaaaea"/>
<rect x="22.3" y="725" width="4.5" height="13" fill="#3b7bc9"/><rect x="29.8" y="725" width="2.2" height="13" fill="#3b7bc9"/><rect x="32" y="725" width="2.5" height="13" fill="#2b5c92"/><rect x="37.4" y="725" width="4.7" height="13" fill="#2b5c92"/>
<rect x="18" y="737.8" width="14" height="6" fill="#c7c7f4"/><rect x="32" y="737.8" width="14.2" height="6" fill="#aaaaea"/>
<circle cx="32" cy="1130" r="16" fill="#6eaede"/>
<g stroke="#fff" stroke-width="1.6" fill="none"><path d="M32 1122.8 L25 1130 L32 1137.2"/><path d="M38.3 1122.8 L31.3 1130 L38.3 1137.2"/></g>
<g stroke="#111" stroke-width="2" fill="none"><path d="M339.5 117.3 L346 110.8 L352.5 117.3"/><path d="M803 110.5 L809.5 117 L816 110.5"/><path d="M355.5 361 L362 354.5 L368.5 361"/><path d="M1171.5 443 L1178 436.5 L1184.5 443"/></g>
<g><path d="M1106 350 V394" stroke="#e8c030" stroke-width="2"/><path d="M1079.8 371 L1131.7 349" stroke="#ecd060" stroke-width="2"/><path d="M1079.8 371 V374.5 M1079.8 374.5 L1074.6 385 M1079.8 374.5 L1086.3 385" stroke="#ecd060" stroke-width="1.8" fill="none"/><path d="M1131.7 349 V353 M1131.7 353 L1125.6 363.6 M1131.7 353 L1137.5 363.6" stroke="#ecd060" stroke-width="1.8" fill="none"/><circle cx="1106" cy="360.3" r="5.2" fill="#566280"/><path d="M1074 385.2 H1087 A6.5 7.3 0 0 1 1074 385.2 Z" fill="#566280"/><path d="M1125.2 364 H1138 A6.4 7 0 0 1 1125.2 364 Z" fill="#566280"/><rect x="1099.7" y="393.5" width="12.6" height="5.6" fill="#c8b496"/><path d="M1090 407.2 C1090.5 402 1094 398.8 1099 398.8 H1113 C1118 398.8 1121.5 402 1122 407.2 Z" fill="#7c7060"/></g>
<g><rect x="1407" y="346" width="10.2" height="63" fill="#748c68"/><rect x="1411" y="346" width="3.4" height="63" fill="#587050"/><rect x="1408" y="346" width=".8" height="63" fill="#cfd8c8"/><rect x="1410" y="346" width=".6" height="63" fill="#90a488"/><rect x="1371.2" y="346" width="36.5" height="63" fill="#748c68"/><path d="M1384 351.8 H1395.5 C1395.5 356 1398 358.2 1402.2 358.2 V397 C1398 397 1395.5 399 1395.5 403.3 H1384 C1384 399 1381.5 397 1377 397 V358.2 C1381.5 358.2 1384 356 1384 351.8 Z" fill="#eae8d8"/><circle cx="1377.5" cy="352.2" r="2.7" fill="#eae8d8"/><circle cx="1401" cy="352.2" r="2.7" fill="#eae8d8"/><circle cx="1377.5" cy="402.8" r="2.7" fill="#eae8d8"/><circle cx="1401" cy="402.8" r="2.7" fill="#eae8d8"/><circle cx="1389" cy="377.5" r="14.5" fill="#748c68"/><path d="M1378 368.5 L1384.5 373.8 L1387 372.3 L1389.5 371.8 L1391.8 372.7 L1393.5 372 L1396.3 372.3 C1397.5 376 1396 382.5 1390 385 L1388 383 L1385 381.5 L1383.5 381.3 L1378 386.3 C1374 381.5 1374 373.5 1378 368.5 Z" fill="#eae8d8"/></g>
<path d="M1407.3 398.5 v4.5 a10.7 6.8 0 0 0 21.4 0 v-4.5 Z" fill="#e0b444"/><ellipse cx="1418.0" cy="403.0" rx="10.7" ry="6.8" fill="#e0b444"/><path d="M1407.3 394.1 v4.5 a10.7 6.8 0 0 0 21.4 0 v-4.5 Z" fill="#c8a038"/><ellipse cx="1418.0" cy="398.5" rx="10.7" ry="6.8" fill="#c8a038"/><path d="M1407.3 389.6 v4.5 a10.7 6.8 0 0 0 21.4 0 v-4.5 Z" fill="#e0b444"/><ellipse cx="1418.0" cy="394.1" rx="10.7" ry="6.8" fill="#e0b444"/><path d="M1407.3 385.2 v4.5 a10.7 6.8 0 0 0 21.4 0 v-4.5 Z" fill="#c8a038"/><ellipse cx="1418.0" cy="389.6" rx="10.7" ry="6.8" fill="#c8a038"/><path d="M1407.3 380.7 v4.5 a10.7 6.8 0 0 0 21.4 0 v-4.5 Z" fill="#e0b444"/><ellipse cx="1418.0" cy="385.2" rx="10.7" ry="6.8" fill="#e0b444"/><path d="M1407.3 376.3 v4.5 a10.7 6.8 0 0 0 21.4 0 v-4.5 Z" fill="#c8a038"/><ellipse cx="1418.0" cy="380.7" rx="10.7" ry="6.8" fill="#c8a038"/><path d="M1407.3 371.8 v4.5 a10.7 6.8 0 0 0 21.4 0 v-4.5 Z" fill="#e0b444"/><ellipse cx="1418.0" cy="376.3" rx="10.7" ry="6.8" fill="#e0b444"/><ellipse cx="1418.0" cy="371.8" rx="10.7" ry="6.8" fill="#f4c850"/>
<path d="M1392.8 398.6 v4.4 a10.5 6.8 0 0 0 21.0 0 v-4.4 Z" fill="#c8a038"/><ellipse cx="1403.3" cy="403.0" rx="10.5" ry="6.8" fill="#c8a038"/><path d="M1392.8 394.2 v4.4 a10.5 6.8 0 0 0 21.0 0 v-4.4 Z" fill="#e0b444"/><ellipse cx="1403.3" cy="398.6" rx="10.5" ry="6.8" fill="#e0b444"/><path d="M1392.8 389.8 v4.4 a10.5 6.8 0 0 0 21.0 0 v-4.4 Z" fill="#c8a038"/><ellipse cx="1403.3" cy="394.2" rx="10.5" ry="6.8" fill="#c8a038"/><path d="M1392.8 385.4 v4.4 a10.5 6.8 0 0 0 21.0 0 v-4.4 Z" fill="#e0b444"/><ellipse cx="1403.3" cy="389.8" rx="10.5" ry="6.8" fill="#e0b444"/><ellipse cx="1403.3" cy="385.4" rx="10.5" ry="6.8" fill="#f4c850"/>
<g><rect x="1735.1" y="388.2" width="8.8" height="20.6" fill="#de8080"/><rect x="1748.6" y="384" width="9.2" height="24.8" fill="#f8dc80"/><rect x="1762.4" y="379" width="8.9" height="29.8" fill="#72c080"/><rect x="1776.1" y="374.4" width="8.9" height="34.4" fill="#405e7c"/><path d="M1729.1 346.8 V408.8 H1791.4" stroke="#50986a" stroke-width="2.2" fill="none" stroke-linecap="round" stroke-linejoin="round"/><circle cx="1760" cy="360.6" r="12.7" fill="#84cae8"/><g stroke="#fff" fill="none"><circle cx="1755" cy="357.8" r="2.3" stroke-width="1.7"/><circle cx="1765" cy="363.6" r="2.3" stroke-width="1.7"/><path d="M1762.6 356.6 L1757.4 365" stroke-width="1.8" stroke-linecap="round"/></g></g>
<g shape-rendering="crispEdges"><rect x="1076" y="1072" width="2" height="2" fill="#000"/><rect x="1074" y="1074" width="2" height="2" fill="#000"/><rect x="1078" y="1074" width="2" height="2" fill="#000"/><rect x="1076" y="1074" width="2" height="2" fill="#b4b4b4"/><rect x="1072" y="1076" width="2" height="2" fill="#000"/><rect x="1080" y="1076" width="2" height="2" fill="#000"/><rect x="1074" y="1076" width="2" height="2" fill="#b4b4b4"/><rect x="1076" y="1076" width="2" height="2" fill="#b4b4b4"/><rect x="1078" y="1076" width="2" height="2" fill="#b4b4b4"/><rect x="1070" y="1078" width="2" height="2" fill="#000"/><rect x="1082" y="1078" width="2" height="2" fill="#000"/><rect x="1072" y="1078" width="2" height="2" fill="#b4b4b4"/><rect x="1074" y="1078" width="2" height="2" fill="#b4b4b4"/><rect x="1076" y="1078" width="2" height="2" fill="#b4b4b4"/><rect x="1078" y="1078" width="2" height="2" fill="#b4b4b4"/><rect x="1080" y="1078" width="2" height="2" fill="#b4b4b4"/><rect x="1068" y="1080" width="2" height="2" fill="#000"/><rect x="1070" y="1080" width="2" height="2" fill="#000"/><rect x="1072" y="1080" width="2" height="2" fill="#000"/><rect x="1074" y="1080" width="2" height="2" fill="#000"/><rect x="1076" y="1080" width="2" height="2" fill="#000"/><rect x="1078" y="1080" width="2" height="2" fill="#000"/><rect x="1080" y="1080" width="2" height="2" fill="#000"/><rect x="1082" y="1080" width="2" height="2" fill="#000"/><rect x="1084" y="1080" width="2" height="2" fill="#000"/><rect x="1076" y="1082" width="2" height="2" fill="#000"/><rect x="1074" y="1084" width="2" height="2" fill="#000"/><rect x="1078" y="1084" width="2" height="2" fill="#000"/><rect x="1076" y="1084" width="2" height="2" fill="#b4b4b4"/><rect x="1072" y="1086" width="2" height="2" fill="#000"/><rect x="1080" y="1086" width="2" height="2" fill="#000"/><rect x="1074" y="1086" width="2" height="2" fill="#b4b4b4"/><rect x="1076" y="1086" width="2" height="2" fill="#b4b4b4"/><rect x="1078" y="1086" width="2" height="2" fill="#b4b4b4"/><rect x="1070" y="1088" width="2" height="2" fill="#000"/><rect x="1072" y="1088" width="2" height="2" fill="#000"/><rect x="1074" y="1088" width="2" height="2" fill="#000"/><rect x="1076" y="1088" width="2" height="2" fill="#000"/><rect x="1078" y="1088" width="2" height="2" fill="#000"/><rect x="1080" y="1088" width="2" height="2" fill="#000"/><rect x="1082" y="1088" width="2" height="2" fill="#000"/><rect x="1076" y="1090" width="2" height="2" fill="#000"/><rect x="1074" y="1092" width="2" height="2" fill="#000"/><rect x="1078" y="1092" width="2" height="2" fill="#000"/><rect x="1076" y="1092" width="2" height="2" fill="#fff"/><rect x="1072" y="1094" width="2" height="2" fill="#000"/><rect x="1074" y="1094" width="2" height="2" fill="#000"/><rect x="1076" y="1094" width="2" height="2" fill="#000"/><rect x="1078" y="1094" width="2" height="2" fill="#000"/><rect x="1080" y="1094" width="2" height="2" fill="#000"/></g>
</svg>
</div></body></html>
